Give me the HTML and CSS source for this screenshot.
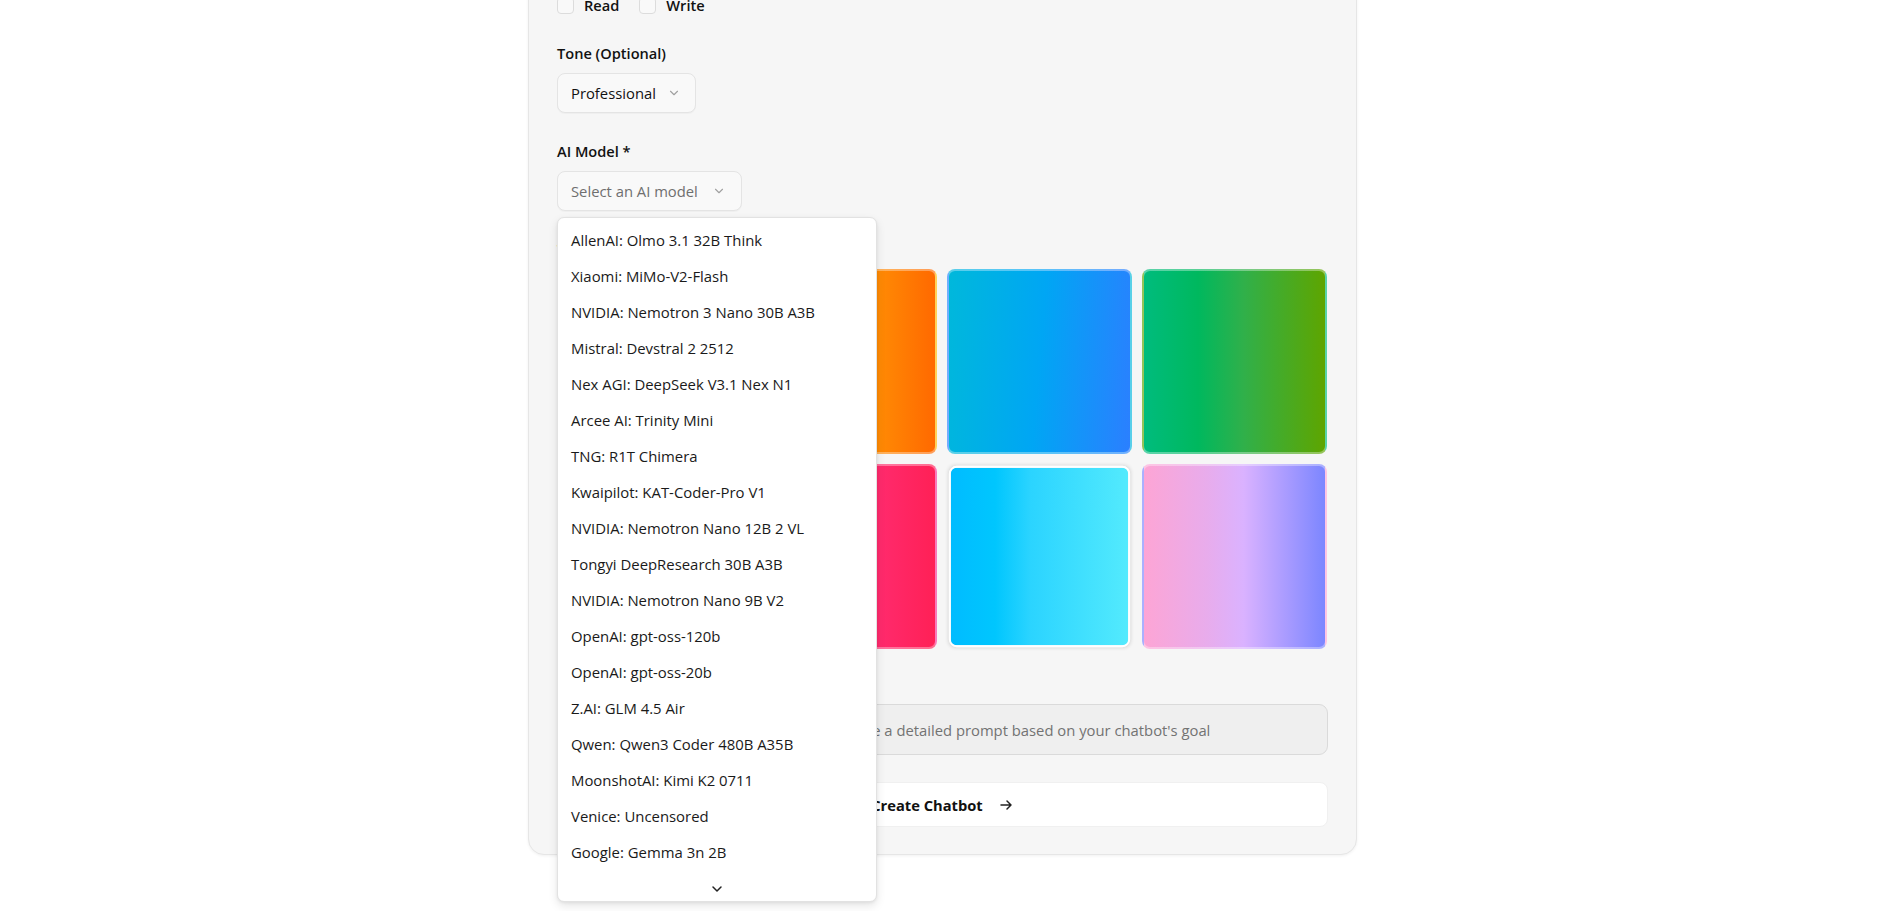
FILE: index.html
```html
<!DOCTYPE html>
<html lang="en">
<head>
<meta charset="utf-8">
<title>Create Chatbot</title>
<link rel="stylesheet" href="styles.css">
</head>
<body>
<div class="page">
  <div class="card">
    <section class="field">
      <div class="label">Permissions</div>
      <div class="checks">
        <label class="check"><span class="box"></span><span class="check-text">Read</span></label>
        <label class="check"><span class="box"></span><span class="check-text">Write</span></label>
      </div>
    </section>

    <section class="field">
      <div class="label">Tone (Optional)</div>
      <div class="select">
        <span class="select-value">Professional</span>
        <svg class="chev" viewBox="0 0 16 16" width="14" height="14"><path d="M4 6l4 4 4-4" fill="none" stroke="currentColor" stroke-width="1.3" stroke-linecap="round" stroke-linejoin="round"/></svg>
      </div>
    </section>

    <section class="field">
      <div class="label">AI Model *</div>
      <div class="select-wrap">
        <div class="select wide">
          <span class="select-value placeholder">Select an AI model</span>
          <svg class="chev" viewBox="0 0 16 16" width="14" height="14"><path d="M4 6l4 4 4-4" fill="none" stroke="currentColor" stroke-width="1.3" stroke-linecap="round" stroke-linejoin="round"/></svg>
        </div>
        <div class="menu">
          <ul class="menu-list">
            <li>AllenAI: Olmo 3.1 32B Think</li>
            <li>Xiaomi: MiMo-V2-Flash</li>
            <li>NVIDIA: Nemotron 3 Nano 30B A3B</li>
            <li>Mistral: Devstral 2 2512</li>
            <li>Nex AGI: DeepSeek V3.1 Nex N1</li>
            <li>Arcee AI: Trinity Mini</li>
            <li>TNG: R1T Chimera</li>
            <li>Kwaipilot: KAT-Coder-Pro V1</li>
            <li>NVIDIA: Nemotron Nano 12B 2 VL</li>
            <li>Tongyi DeepResearch 30B A3B</li>
            <li>NVIDIA: Nemotron Nano 9B V2</li>
            <li>OpenAI: gpt-oss-120b</li>
            <li>OpenAI: gpt-oss-20b</li>
            <li>Z.AI: GLM 4.5 Air</li>
            <li>Qwen: Qwen3 Coder 480B A35B</li>
            <li>MoonshotAI: Kimi K2 0711</li>
            <li>Venice: Uncensored</li>
            <li>Google: Gemma 3n 2B</li>
          </ul>
          <div class="menu-more">
            <svg viewBox="0 0 16 16" width="16" height="16"><path d="M4 6l4 4 4-4" fill="none" stroke="currentColor" stroke-width="1.5" stroke-linecap="round" stroke-linejoin="round"/></svg>
          </div>
        </div>
      </div>
    </section>

    <section class="field">
      <div class="label">Theme</div>
      <div class="tiles">
        <div class="tile t-violet"></div>
        <div class="tile t-orange"></div>
        <div class="tile t-blue"></div>
        <div class="tile t-green"></div>
        <div class="tile t-slate"></div>
        <div class="tile t-rose"></div>
        <div class="tile t-cyan selected"></div>
        <div class="tile t-pastel"></div>
      </div>
    </section>

    <section class="field prompt-field">
      <div class="label">System Prompt (Optional)</div>
      <div class="prompt">Leave it empty and an assistant will generate a detailed prompt based on your chatbot's goal</div>
    </section>

    <button class="create">
      <span>Create Chatbot</span>
      <svg viewBox="0 0 16 16" width="16" height="16"><path d="M3 8h10M9 4l4 4-4 4" fill="none" stroke="currentColor" stroke-width="1.5" stroke-linecap="round" stroke-linejoin="round"/></svg>
    </button>
  </div>
</div>
</body>
</html>
```

FILE: styles.css
```css
* { box-sizing: border-box; }
html, body { margin: 0; padding: 0; background: #ffffff; height: 100%; overflow: hidden; }
body { font-family: "Open Sans", "Noto Sans", "Liberation Sans", sans-serif; color: #111; }

.page {
  display: flex;
  justify-content: center;
  padding-right: 9px;
}

.card {
  width: 829px;
  margin-top: -65px;
  background: #f6f6f6;
  border: 1px solid #e6e6e6;
  border-radius: 16px;
  box-shadow: 0 1px 3px rgba(0,0,0,0.06);
  padding: 28px 28px 27px 28px;
  display: flex;
  flex-direction: column;
  gap: 27px;
}

.field { display: flex; flex-direction: column; align-items: flex-start; }

.label {
  font-size: 14.6px;
  font-weight: 600;
  line-height: 22px;
  height: 22px;
  margin-bottom: 9px;
  color: #111;
}

.checks { display: flex; gap: 20px; height: 20px; align-items: center; }
.check { display: flex; align-items: center; gap: 10px; }
.box {
  width: 17px; height: 17px;
  border: 1px solid #dcdcdc;
  border-radius: 4px;
  background: #f9f9f9;
}
.check-text { font-size: 14.6px; font-weight: 600; }

.select {
  height: 40px;
  display: inline-flex;
  align-items: center;
  gap: 11px;
  padding: 0 14px 0 13px;
  background: #f9f9f9;
  border: 1px solid #e4e4e4;
  border-radius: 8px;
  box-shadow: 0 1px 1px rgba(0,0,0,0.03);
  font-size: 14.8px;
}
.select.wide { gap: 14px; padding-right: 15px; }
.select-value { color: #111; }
.select-value.placeholder { color: #6f6f6f; }
.chev { color: #a0a0a0; }

.select-wrap { position: relative; }

.menu {
  position: absolute;
  top: calc(100% + 6px);
  left: 0;
  width: 320px;
  z-index: 10;
  background: #ffffff;
  border: 1px solid #e2e2e2;
  border-radius: 7px;
  box-shadow: 0 4px 10px rgba(0,0,0,0.10), 0 1px 3px rgba(0,0,0,0.06);
  padding: 4px 5px 0 5px;
}
.menu-list { list-style: none; margin: 0; padding: 0 0 7px 0; }
.menu-list li {
  height: 36px;
  line-height: 36px;
  padding-left: 8px;
  font-size: 14.9px;
  color: #1a1a1a;
  white-space: nowrap;
}
.menu-more {
  height: 24px;
  display: flex;
  align-items: center;
  justify-content: center;
  color: #222;
}

.tiles {
  display: grid;
  grid-template-columns: repeat(4, 185px);
  grid-auto-rows: 185px;
  gap: 10px;
}
.tile {
  border-radius: 8px;
  border: 2px solid rgba(255,255,255,0.35);
}
.t-orange { background: linear-gradient(90deg, #ffb900, #ff8904 70%, #ff6900); }
.t-blue { background: linear-gradient(95deg, #00b8db, #00a6f4 50%, #2b7fff); }
.t-green { background: linear-gradient(90deg, #00bc7d, #00b85e 30%, #30b04a 55%, #5ea500); }
.t-violet { background: linear-gradient(90deg, #8e51ff, #ad46ff); }
.t-rose { background: linear-gradient(90deg, #f6339a, #ff2a6c 70%, #ff2056); }
.t-cyan { background: linear-gradient(90deg, #00bcff, #00c6fe 25%, #2bd4ff 45%, #53eafd); }
.t-pastel { background: linear-gradient(90deg, #fda5d5, #e8acec 35%, #dab2ff 55%, #7c86ff); }
.t-slate { background: linear-gradient(90deg, #62748e, #314158); }
.tile.selected {
  border: 2px solid #ffffff;
  transform: scale(0.98);
  box-shadow: 0 0 4px rgba(0,0,0,0.12);
}

.prompt-field .label { margin-bottom: 6px; }
.prompt {
  width: 100%;
  height: 51px;
  display: flex;
  align-items: center;
  padding: 0 14px;
  background: #efefef;
  border: 1px solid #dadada;
  border-radius: 9px;
  color: #737373;
  font-size: 14.8px;
  white-space: nowrap;
  overflow: hidden;
}

.create {
  width: 100%;
  height: 45px;
  display: flex;
  align-items: center;
  justify-content: center;
  gap: 15px;
  background: #ffffff;
  border: 1px solid #f0f0f0;
  border-radius: 8px;
  font-family: inherit;
  font-size: 14.7px;
  font-weight: 700;
  color: #111;
  padding: 0;
}
.create svg { color: #222; }
```
